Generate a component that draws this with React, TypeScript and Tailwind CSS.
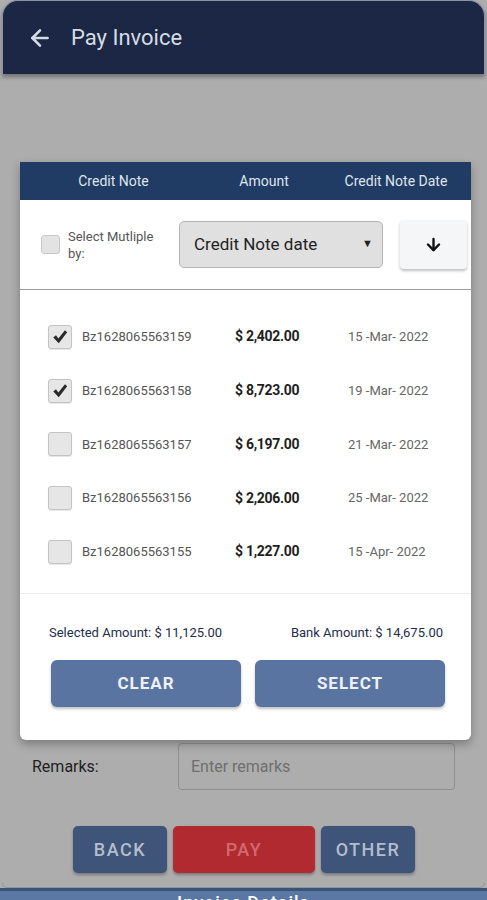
import { ArrowLeft, ArrowDown } from "lucide-react";

const notes = [
  { id: "Bz1628065563159", amount: "$ 2,402.00", date: "15 -Mar- 2022", checked: true },
  { id: "Bz1628065563158", amount: "$ 8,723.00", date: "19 -Mar- 2022", checked: true },
  { id: "Bz1628065563157", amount: "$ 6,197.00", date: "21 -Mar- 2022", checked: false },
  { id: "Bz1628065563156", amount: "$ 2,206.00", date: "25 -Mar- 2022", checked: false },
  { id: "Bz1628065563155", amount: "$ 1,227.00", date: "15 -Apr- 2022", checked: false },
];

// heavy filled check like the native checkbox tick
const Tick = () => (
  <svg viewBox="0 0 20 20" className="w-[18px] h-[18px]">
    <path d="M2.5 10.5 L5.5 8 L8.2 11.8 L15.5 2.5 L18 4.8 L8.6 17 Z" fill="#2a2a2a" />
  </svg>
);

const App = () => {
  return (
    <div className="relative w-full h-[900px] overflow-hidden bg-[#adadad] font-['Roboto',sans-serif]">
      {/* Top bar (dimmed) */}
      <div className="mx-[2px] h-[74px] bg-[#1b2744] rounded-t-[16px] border-t border-x border-[#8d93a0] shadow-[0_3px_4px_rgba(0,0,0,0.35)] flex items-center pl-[24px] gap-[18px]">
        <ArrowLeft className="w-[26px] h-[26px] text-[#d6dbe4]" strokeWidth={2.4} />
        <span className="text-[22px] text-[#d6dbe4]">Pay Invoice</span>
      </div>

      {/* Page content behind the dialog */}
      <div className="flex flex-col pt-[669px]">
        <div className="flex items-center pl-[32px] pr-[32px]">
          <span className="w-[146px] text-[16px] text-[#1f1f1f]">Remarks:</span>
          <div className="flex-1 h-[47px] border border-[#8f8f8f] rounded-[4px] flex items-center px-[12px] text-[16px] text-[#6f6f6f]">
            Enter remarks
          </div>
        </div>
        <div className="flex justify-center gap-[6px] mt-[36px] pl-[1px]">
          <button className="w-[94px] h-[47px] rounded-[5px] bg-[#3e5478] text-[#b4bdcb] text-[18px] font-medium tracking-[1.5px] shadow-[0_2px_3px_rgba(0,0,0,0.3)]">
            BACK
          </button>
          <button className="w-[142px] h-[47px] rounded-[5px] bg-[#b12a30] text-[#d06a6f] text-[18px] font-medium tracking-[1.5px] shadow-[0_2px_3px_rgba(0,0,0,0.3)]">
            PAY
          </button>
          <button className="w-[94px] h-[47px] rounded-[5px] bg-[#3e5478] text-[#b4bdcb] text-[18px] font-medium tracking-[1.5px] shadow-[0_2px_3px_rgba(0,0,0,0.3)]">
            OTHER
          </button>
        </div>
        <div className="mt-[10px] mx-[2px] h-[5px] rounded-b-[14px] border-b border-x border-[#8d93a0] bg-[#adadad]"></div>
        <div className="h-[3px] bg-[#3d5374]"></div>
        <div className="h-[20px] bg-[#5a78a3] flex justify-center items-start">
          <span className="text-[18px] leading-[18px] font-medium text-white tracking-[1px] mt-[3px]">Invoice Details</span>
        </div>
      </div>

      {/* Dialog */}
      <div className="absolute left-[20px] top-[162px] w-[451px] bg-white rounded-b-[6px] shadow-[0_4px_10px_rgba(0,0,0,0.3)]">
        <div className="h-[38px] bg-[#213c64] grid grid-cols-[187px_114px_150px] items-center text-[14px] text-[#dfe5ee]">
          <span className="text-center">Credit Note</span>
          <span className="text-center">Amount</span>
          <span className="text-center">Credit Note Date</span>
        </div>

        <div className="flex items-center h-[90px] pl-[21px] pr-[3px] border-b border-[#9c9c9c]">
          <div className="w-[19px] h-[19px] rounded-[3px] border border-[#c8c8c8] bg-[#e3e3e3]"></div>
          <div className="ml-[8px] w-[100px] text-[13px] leading-[17px] text-[#555555]">
            Select Mutliple
            <br />
            by:
          </div>
          <div className="ml-[11px] w-[204px] h-[47px] rounded-[5px] border border-[#b5b5b5] bg-[#e0e0e0] flex items-center justify-between pl-[14px] pr-[9px]">
            <span className="text-[17px] text-[#222222]">Credit Note date</span>
            <span className="text-[11px] text-[#222222]">▼</span>
          </div>
          <div className="ml-[17px] w-[67px] h-[49px] rounded-[4px] bg-[#f4f6f8] shadow-[0_2px_3px_rgba(0,0,0,0.25)] flex items-center justify-center">
            <ArrowDown className="w-[19px] h-[19px] text-[#111111]" strokeWidth={3} />
          </div>
        </div>

        <div className="flex flex-col pt-[20px] pb-[14px] border-b border-[#ececec]">
          {notes.map((n) => (
            <div key={n.id} className="flex items-center h-[53.75px] pl-[28px]">
              <div className="w-[24px] h-[24px] rounded-[3px] border border-[#c4c4c4] bg-[#e6e6e6] flex items-center justify-center shadow-[0_1px_1px_rgba(0,0,0,0.1)]">
                {n.checked && <Tick />}
              </div>
              <span className="ml-[10px] w-[153px] text-[13px] text-[#555555]">{n.id}</span>
              <span className="w-[113px] text-[14px] font-bold text-[#1e1e1e] tracking-[-0.3px]">{n.amount}</span>
              <span className="text-[13px] text-[#666666]">{n.date}</span>
            </div>
          ))}
        </div>

        <div className="flex justify-between items-center pl-[29px] pr-[28px] pt-[29px] text-[13px] text-[#1e2d4c]">
          <span>Selected Amount: $ 11,125.00</span>
          <span>Bank Amount: $ 14,675.00</span>
        </div>

        <div className="flex gap-[14px] pl-[31px] pr-[26px] pt-[18px] pb-[33px]">
          <button className="flex-1 h-[47px] rounded-[6px] bg-[#5a74a1] text-[#eef1f6] text-[17px] font-bold tracking-[1px] shadow-[0_2px_3px_rgba(0,0,0,0.25)]">
            CLEAR
          </button>
          <button className="flex-1 h-[47px] rounded-[6px] bg-[#5a74a1] text-[#eef1f6] text-[17px] font-bold tracking-[1px] shadow-[0_2px_3px_rgba(0,0,0,0.25)]">
            SELECT
          </button>
        </div>
      </div>
    </div>
  );
};

export default App;
